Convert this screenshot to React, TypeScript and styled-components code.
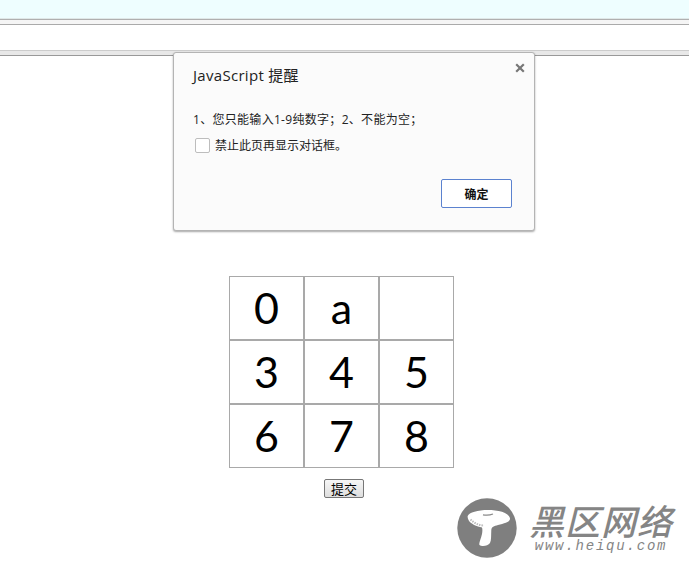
import styled, { createGlobalStyle } from 'styled-components';

const cells = ['0', 'a', '', '3', '4', '5', '6', '7', '8'];

export default function App() {
	return (
		<>
			<GlobalStyle />
			<Page>
				<TabStrip />
				<TopLine />
				<AddressBar />
				<BarShadow />
				<Content>
					<Board>
						{cells.map((cell, idx) => (
							<Cell key={idx}>{cell}</Cell>
						))}
					</Board>
					<SubmitButton>提交</SubmitButton>
				</Content>
				<Dialog>
					<CloseIcon width='10' height='10' viewBox='0 0 10 10'>
						<path d='M1.2 1.2 L8.8 8.8 M8.8 1.2 L1.2 8.8' />
					</CloseIcon>
					<DialogTitle>JavaScript 提醒</DialogTitle>
					<Message>1、您只能输入1-9纯数字；2、不能为空；</Message>
					<CheckRow>
						<CheckBox />
						<CheckLabel>禁止此页再显示对话框。</CheckLabel>
					</CheckRow>
					<DialogFooter>
						<OkButton>确定</OkButton>
					</DialogFooter>
				</Dialog>
				<Watermark>
					<Logo width='60' height='60' viewBox='0 0 60 60'>
						<circle cx='30' cy='30' r='29.7' fill='#7f7f7f' />
						<path
							d='M10.7 18 C12 14.5 21 12 31 12 C40 12 52 14 53 20.5 C53.5 24 47 25.5 41 27 C37 28 34.5 29 34.3 32 C34 37 34.5 42 33 45 C31 48 25 49 22.5 47 C21.5 45.5 24 41 25 36 C25.5 33 25.5 31 25 29.5 C20 28.5 13.5 26 11.5 22 C10.8 20.5 10.4 19 10.7 18 Z'
							fill='#fff'
						/>
						<path d='M26 16.8 C29 17.4 33 17.2 36 16' stroke='#8a8a8a' strokeWidth='1.2' fill='none' />
						<path d='M13.5 21.5 C17 25 22 27.5 27 27.5' stroke='#bdbdbd' strokeWidth='2' strokeDasharray='1.5 1' fill='none' />
					</Logo>
					<Brand>
						<BrandName>黑区网络</BrandName>
						<BrandUrl>www.heiqu.com</BrandUrl>
					</Brand>
				</Watermark>
			</Page>
		</>
	);
}

const GlobalStyle = createGlobalStyle`
	html, body {
		margin: 0;
		padding: 0;
		background: #fff;
	}
`;

const Page = styled.div`
	position: relative;
	width: 689px;
	height: 563px;
	overflow: hidden;
	font-family: 'Open Sans', 'Noto Sans CJK SC', sans-serif;
`;

const TabStrip = styled.div`
	height: 18px;
	background: #eefeff;
	border-bottom: 1px solid #dfe8e8;
`;

const TopLine = styled.div`
	height: 4px;
	background: #f5f5f5;
	border-top: 1px solid #b0b0b0;
	border-bottom: 1px solid #aaa;
`;

const AddressBar = styled.div`
	height: 25px;
	background: #fff;
`;

const BarShadow = styled.div`
	height: 4px;
	background: #e8e8e8;
	border-top: 1px solid #ccc;
	border-bottom: 1px solid #999;
`;

const Content = styled.main`
	display: flex;
	flex-direction: column;
	align-items: center;
	padding-top: 220px;
`;

const Board = styled.div`
	display: grid;
	grid-template-columns: repeat(3, 75px);
	grid-template-rows: repeat(3, 64px);
	margin-right: 6px;
`;

const Cell = styled.div`
	display: flex;
	align-items: center;
	justify-content: center;
	box-sizing: border-box;
	padding-bottom: 1px;
	border: 1px solid #a9a9a9;
	font-family: Lato, 'Open Sans', sans-serif;
	font-size: 43px;
	color: #000;
`;

const SubmitButton = styled.button`
	width: 40px;
	height: 19px;
	margin-top: 11px;
	margin-right: 1px;
	padding: 0;
	border: 1px solid #777;
	border-radius: 2px;
	background: linear-gradient(#f6f6f6, #dedede);
	font-family: 'Noto Sans CJK SC', sans-serif;
	font-size: 13px;
	line-height: 17px;
	color: #000;
`;

const Dialog = styled.section`
	position: absolute;
	left: 173px;
	top: 52px;
	box-sizing: border-box;
	width: 362px;
	height: 179px;
	padding: 14px 22px 0 19px;
	background: #fbfbfb;
	border: 1px solid #b4b4b4;
	border-radius: 3px;
	box-shadow: 0 1px 2px rgba(0, 0, 0, 0.35);
`;

const CloseIcon = styled.svg`
	position: absolute;
	right: 9px;
	top: 10px;
	fill: none;
	stroke: #777;
	stroke-width: 2.2;
`;

const DialogTitle = styled.h1`
	margin: 0;
	font-family: 'Open Sans', 'Noto Sans CJK SC', sans-serif;
	font-size: 15px;
	font-weight: 400;
	line-height: 17px;
	letter-spacing: 0.3px;
	color: #222;
`;

const Message = styled.p`
	margin: 28px 0 0 0;
	font-size: 12px;
	line-height: 15px;
	letter-spacing: 0.3px;
	color: #222;
`;

const CheckRow = styled.label`
	display: flex;
	align-items: center;
	gap: 5px;
	margin-top: 11px;
	margin-left: 2px;
`;

const CheckBox = styled.span`
	width: 13px;
	height: 13px;
	background: #fff;
	border: 1px solid #bdbdbd;
	border-radius: 2px;
`;

const CheckLabel = styled.span`
	font-size: 12px;
	line-height: 15px;
	color: #222;
`;

const DialogFooter = styled.div`
	display: flex;
	justify-content: flex-end;
	margin-top: 26px;
`;

const OkButton = styled.button`
	width: 71px;
	height: 29px;
	padding: 0;
	background: #fff;
	border: 1px solid #5b82cf;
	border-radius: 2px;
	font-family: 'Noto Sans CJK SC', sans-serif;
	font-size: 12px;
	font-weight: 700;
	color: #111;
`;

const Watermark = styled.aside`
	position: absolute;
	left: 457px;
	top: 498px;
	display: flex;
	align-items: flex-start;
	gap: 12px;
`;

const Logo = styled.svg`
	display: block;
	flex: none;
`;

const Brand = styled.div`
	display: flex;
	flex-direction: column;
	align-items: center;
	gap: 2px;
	padding-top: 3px;
	color: #858585;
`;

const BrandName = styled.div`
	font-family: 'Noto Sans CJK SC', sans-serif;
	font-size: 35px;
	font-weight: 500;
	font-style: italic;
	line-height: 37px;
	letter-spacing: 1px;
	white-space: nowrap;
`;

const BrandUrl = styled.div`
	font-family: 'Liberation Mono', monospace;
	font-size: 14px;
	font-style: italic;
	line-height: 13px;
	letter-spacing: 1.8px;
`;
